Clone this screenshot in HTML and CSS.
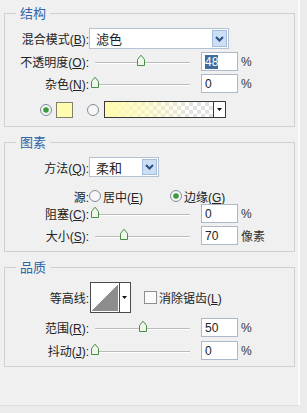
FILE: index.html
```html
<!DOCTYPE html>
<html lang="zh-CN">
<head>
    <meta charset="UTF-8">
    <meta name="viewport" content="width=device-width, initial-scale=1.0">
    <title>外发光</title>
    <link rel="stylesheet" href="styles.css">
</head>
<body>
<div class="panel">

    <fieldset class="group first">
        <legend>结构</legend>
        <div class="row h21">
            <label class="lbl">混合模式(<u>B</u>):</label>
            <div class="select wide">
                <span class="val">滤色</span>
                <span class="drop"><svg width="9" height="6" viewBox="0 0 9 6"><polyline points="1,1 4.5,4.5 8,1" fill="none" stroke="#2b4f80" stroke-width="2"/></svg></span>
            </div>
        </div>
        <div class="row h19 mt3">
            <label class="lbl">不透明度(<u>O</u>):</label>
            <div class="slider"><div class="track"><svg class="thumb" style="left:48%" width="10" height="12" viewBox="0 0 10 12"><path d="M1.5 11.5V5.5L5 1.2L8.5 5.5V11.5Z" fill="#eef7ea" stroke="#4a8c4a"/></svg></div></div>
            <div class="num"><span class="sel">48</span></div>
            <span class="unit">%</span>
        </div>
        <div class="row h19 mt3">
            <label class="lbl">杂色(<u>N</u>):</label>
            <div class="slider"><div class="track"><svg class="thumb" style="left:0%" width="10" height="12" viewBox="0 0 10 12"><path d="M1.5 11.5V5.5L5 1.2L8.5 5.5V11.5Z" fill="#eef7ea" stroke="#4a8c4a"/></svg></div></div>
            <div class="num">0</div>
            <span class="unit">%</span>
        </div>
        <div class="row h17 mt8 colors">
            <svg class="radio" width="12" height="12" viewBox="0 0 12 12"><circle cx="6" cy="6" r="5.5" fill="#f6f6f6" stroke="#7e8c9c"/><circle cx="6" cy="6" r="2.8" fill="#3c9a3c"/></svg>
            <span class="swatch"></span>
            <svg class="radio r2" width="12" height="12" viewBox="0 0 12 12"><circle cx="6" cy="6" r="5.5" fill="#f6f6f6" stroke="#7e8c9c"/></svg>
            <div class="gradient">
                <span class="ramp"></span>
                <span class="arrow"><svg width="5" height="3" viewBox="0 0 5 3"><polygon points="0,0 5,0 2.5,3" fill="#111"/></svg></span>
            </div>
        </div>
    </fieldset>

    <fieldset class="group">
        <legend>图素</legend>
        <div class="row h20">
            <label class="lbl">方法(<u>Q</u>):</label>
            <div class="select narrow">
                <span class="val">柔和</span>
                <span class="drop"><svg width="9" height="6" viewBox="0 0 9 6"><polyline points="1,1 4.5,4.5 8,1" fill="none" stroke="#2b4f80" stroke-width="2"/></svg></span>
            </div>
        </div>
        <div class="row h14 mt12">
            <label class="lbl">源:</label>
            <svg class="radio" width="12" height="12" viewBox="0 0 12 12"><circle cx="6" cy="6" r="5.5" fill="#f6f6f6" stroke="#7e8c9c"/></svg>
            <span class="opt">居中(<u>E</u>)</span>
            <svg class="radio r3" width="12" height="12" viewBox="0 0 12 12"><circle cx="6" cy="6" r="5.5" fill="#f6f6f6" stroke="#7e8c9c"/><circle cx="6" cy="6" r="2.8" fill="#3c9a3c"/></svg>
            <span class="opt">边缘(<u>G</u>)</span>
        </div>
        <div class="row h19 mt1">
            <label class="lbl">阻塞(<u>C</u>):</label>
            <div class="slider"><div class="track"><svg class="thumb" style="left:0%" width="10" height="12" viewBox="0 0 10 12"><path d="M1.5 11.5V5.5L5 1.2L8.5 5.5V11.5Z" fill="#eef7ea" stroke="#4a8c4a"/></svg></div></div>
            <div class="num">0</div>
            <span class="unit">%</span>
        </div>
        <div class="row h19 mt3">
            <label class="lbl">大小(<u>S</u>):</label>
            <div class="slider"><div class="track"><svg class="thumb" style="left:31%" width="10" height="12" viewBox="0 0 10 12"><path d="M1.5 11.5V5.5L5 1.2L8.5 5.5V11.5Z" fill="#eef7ea" stroke="#4a8c4a"/></svg></div></div>
            <div class="num">70</div>
            <span class="unit">像素</span>
        </div>
    </fieldset>

    <fieldset class="group">
        <legend>品质</legend>
        <div class="row h31">
            <label class="lbl">等高线:</label>
            <div class="contour">
                <span class="curve"></span>
                <span class="arrow"><svg width="5" height="3" viewBox="0 0 5 3"><polygon points="0,0 5,0 2.5,3" fill="#111"/></svg></span>
            </div>
            <span class="check"></span>
            <span class="opt">消除锯齿(<u>L</u>)</span>
        </div>
        <div class="row h19 mt5">
            <label class="lbl">范围(<u>R</u>):</label>
            <div class="slider"><div class="track"><svg class="thumb" style="left:50%" width="10" height="12" viewBox="0 0 10 12"><path d="M1.5 11.5V5.5L5 1.2L8.5 5.5V11.5Z" fill="#eef7ea" stroke="#4a8c4a"/></svg></div></div>
            <div class="num">50</div>
            <span class="unit">%</span>
        </div>
        <div class="row h19 mt4">
            <label class="lbl">抖动(<u>J</u>):</label>
            <div class="slider"><div class="track"><svg class="thumb" style="left:0%" width="10" height="12" viewBox="0 0 10 12"><path d="M1.5 11.5V5.5L5 1.2L8.5 5.5V11.5Z" fill="#eef7ea" stroke="#4a8c4a"/></svg></div></div>
            <div class="num">0</div>
            <span class="unit">%</span>
        </div>
    </fieldset>

</div>
</body>
</html>
```

FILE: styles.css
```css
body {
    margin: 0;
    background-color: #ebebeb;
    font-family: "Liberation Sans", "Noto Sans CJK SC", sans-serif;
    font-size: 12px;
    color: #222;
}

.panel {
    width: 298px;
    height: 405px;
    background-color: #f0f0f0;
    border-right: 2px solid #fbfbfb;
    border-bottom: 1px solid #dedede;
    overflow: hidden;
}

.group {
    margin: 7px 3px 0 4px;
    padding: 7px 0 6px 0;
    border: 1px solid #d0d0d0;
    min-width: 0;
}

.group.first {
    margin-top: 5px;
    padding-bottom: 8px;
}

legend {
    margin-left: 11px;
    padding: 0 4px;
    font-family: "Noto Sans CJK SC", sans-serif;
    font-size: 13px;
    line-height: 16px;
    color: #2f64a8;
}

.row {
    display: flex;
    align-items: center;
    white-space: nowrap;
}

.h14 { height: 14px; }
.h17 { height: 17px; }
.h19 { height: 19px; }
.h20 { height: 20px; }
.h21 { height: 21px; }
.h31 { height: 31px; }
.mt1 { margin-top: 1px; }
.mt3 { margin-top: 3px; }
.mt4 { margin-top: 4px; }
.mt5 { margin-top: 5px; }
.mt8 { margin-top: 8px; }
.mt12 { margin-top: 12px; }

.lbl {
    width: 84px;
    flex: none;
    text-align: right;
}

/* dropdowns */
.select {
    display: flex;
    align-items: center;
    box-sizing: border-box;
    height: 100%;
    padding-left: 6px;
    background-color: #fff;
    border: 1px solid #b3c1d3;
}

.select.wide { width: 140px; }
.select.narrow { width: 70px; }

.select .val {
    flex: 1;
    font-family: "Noto Sans CJK SC", sans-serif;
    font-size: 13px;
}

.drop {
    display: flex;
    align-items: center;
    justify-content: center;
    box-sizing: border-box;
    width: 15px;
    height: calc(100% - 2px);
    margin-right: 1px;
    background-color: #cbdef4;
    border: 1px solid #a3bcdb;
}

/* sliders */
.slider {
    display: flex;
    align-items: center;
    box-sizing: border-box;
    width: 112px;
    height: 19px;
    padding-left: 6px;
}

.track {
    position: relative;
    width: 95px;
    height: 1px;
    margin-top: 2px;
    background-color: #bcbcbc;
    box-shadow: 0 1px 0 #fff;
}

.thumb {
    position: absolute;
    bottom: -3px;
    margin-left: -5px;
    display: block;
}

.num {
    display: flex;
    align-items: center;
    box-sizing: border-box;
    width: 37px;
    height: 19px;
    padding-left: 3px;
    background-color: #fff;
    border: 1px solid #adb9ca;
}

.num .sel {
    background-color: #3e6c9c;
    color: #fff;
}

.unit {
    margin-left: 3px;
    color: #333;
}

/* colour row */
.colors {
    padding-left: 35px;
}

.radio {
    flex: none;
    display: block;
}

.swatch {
    width: 15px;
    height: 14px;
    margin-left: 4px;
    background-color: #fffcb0;
    border: 1px solid #807f70;
}

.radio.r2 { margin-left: 14px; }
.radio.r3 { margin-left: 27px; }

.opt {
    margin-left: 2px;
}

.gradient {
    display: flex;
    box-sizing: border-box;
    width: 122px;
    height: 17px;
    margin-left: 5px;
    border: 1px solid #3a3a3a;
    background-color: #fff;
}

.ramp {
    flex: 1;
    background:
        linear-gradient(to right, #fffcae 0%, rgba(255, 252, 174, 0.6) 35%, rgba(255, 252, 174, 0) 80%),
        repeating-conic-gradient(#e2e2e2 0% 25%, #ffffff 0% 50%) 0 0 / 8px 8px;
}

.arrow {
    display: flex;
    align-items: center;
    justify-content: center;
    width: 11px;
    border-left: 1px solid #3a3a3a;
    background-color: #fff;
}

/* contour */
.contour {
    display: flex;
    box-sizing: border-box;
    width: 41px;
    height: 31px;
    margin-left: 1px;
    padding: 1px 0 1px 1px;
    border: 1px solid #4a4a4a;
    background-color: #fff;
}

.curve {
    width: 28px;
    background: linear-gradient(to bottom right, #fff 50%, #8d8d8d 50%);
}

.contour .arrow {
    margin-left: 1px;
    margin-top: -1px;
    margin-bottom: -1px;
    border-left-color: #4a4a4a;
}

.check {
    box-sizing: border-box;
    width: 13px;
    height: 13px;
    margin-left: 13px;
    background-color: #fbfbfb;
    border: 1px solid #8e8f8f;
}
```
